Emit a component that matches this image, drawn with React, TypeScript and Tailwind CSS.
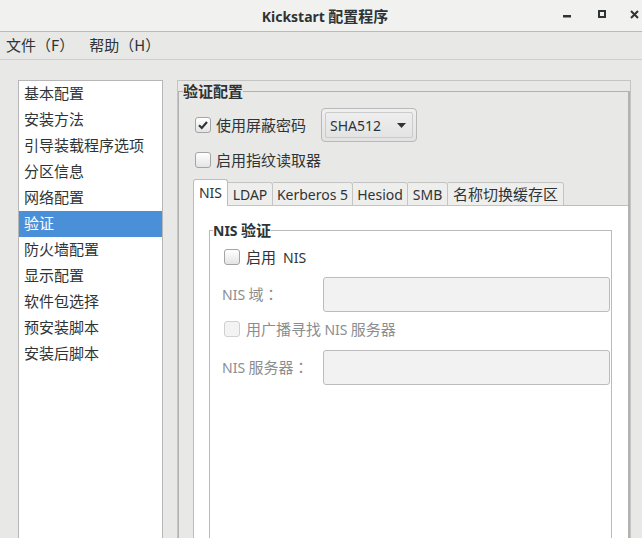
import React from "react";
import clsx from "clsx";

const sections = [
  "基本配置",
  "安装方法",
  "引导装载程序选项",
  "分区信息",
  "网络配置",
  "验证",
  "防火墙配置",
  "显示配置",
  "软件包选择",
  "预安装脚本",
  "安装后脚本",
];

const tabs = [
  { label: "NIS", latin: true, w: "w-[35px]" },
  { label: "LDAP", latin: true, w: "w-[45px]" },
  { label: "Kerberos 5", latin: true, w: "w-[80px]" },
  { label: "Hesiod", latin: true, w: "w-[55px]" },
  { label: "SMB", latin: true, w: "w-[40px]" },
  { label: "名称切换缓存区", latin: false, w: "w-[116px]" },
];

// latin runs are set in a narrower face than the CJK text
function L({ children }: { children: React.ReactNode }) {
  return <span className="font-['Noto_Sans'] text-[14px]">{children}</span>;
}

// full-width punctuation centred in its cell, as in the reference
function P({ children }: { children: React.ReactNode }) {
  return <span className="font-['Noto_Sans_CJK_TC',sans-serif]">{children}</span>;
}

function Check({ checked, disabled }: { checked?: boolean; disabled?: boolean }) {
  return (
    <span
      className={clsx(
        "flex h-[16px] w-[16px] shrink-0 items-center justify-center rounded-[3px] border",
        disabled
          ? "border-[#cfd1d1] bg-[#f3f3f3]"
          : "border-[#a3a5a5] bg-linear-to-b from-white to-[#e4e4e4]"
      )}
    >
      {checked && (
        <svg width="12" height="12" viewBox="0 0 12 12">
          <path d="M2 6.2 L4.8 9 L10 3" stroke="#2e3436" strokeWidth="2.2" fill="none" />
        </svg>
      )}
    </span>
  );
}

function Entry() {
  return <div className="h-[35px] w-[287px] rounded-[3px] border border-[#bcbcbc] bg-[#f2f2f2]" />;
}

export default function App() {
  return (
    <div className="flex h-[538px] w-[642px] flex-col overflow-hidden bg-[#e8e8e7] font-['Noto_Sans_CJK_SC',sans-serif] text-[15px] text-[#2e3436]">
      {/* title bar */}
      <div className="relative flex h-[32px] shrink-0 items-center justify-center border-b border-[#b9b9b6] bg-[#f1f1f0] pl-[8px]">
        <span className="font-bold leading-none">
          <span className="font-['Noto_Sans'] text-[14px]">Kickstart</span> 配置程序
        </span>
        <div className="absolute right-0 top-0 flex h-full items-start">
          <svg className="ml-0 mt-[15px]" width="8" height="3" viewBox="0 0 8 3">
            <rect x="0" y="0" width="8" height="2.5" fill="#2e3436" />
          </svg>
          <svg className="ml-[27px] mt-[10px]" width="8" height="8" viewBox="0 0 8 8">
            <rect x="1" y="1" width="6" height="6" stroke="#2e3436" strokeWidth="2" fill="none" />
          </svg>
          <svg className="ml-[24px] mr-[3px] mt-[10px]" width="9" height="9" viewBox="0 0 9 9">
            <path d="M1 1 L8 8 M8 1 L1 8" stroke="#2e3436" strokeWidth="2" />
          </svg>
        </div>
      </div>

      {/* menu bar */}
      <div className="flex h-[28px] shrink-0 items-center gap-[15px] border-b border-[#cfcfcd] pl-[6px]">
        <span>
          文件<P>（</P>F<P>）</P>
        </span>
        <span>
          帮助<P>（</P>H<P>）</P>
        </span>
      </div>

      <div className="flex min-h-0 flex-1 pl-[18px] pt-[20px]">
        {/* section list */}
        <div className="w-[145px] shrink-0 border border-b-0 border-[#b6b6b6] bg-white">
          {sections.map((s) => (
            <div
              key={s}
              className={clsx(
                "h-[26px] px-[5px] leading-[23px]",
                s === "验证" && "bg-[#4a90d9] text-white"
              )}
            >
              {s}
            </div>
          ))}
        </div>

        {/* right pane */}
        <div className="ml-[14px] w-[454px] shrink-0 border border-b-0 border-[#c4c4c2]">
          <fieldset className="h-full border-l border-r-2 border-t border-[#b2b2b2]">
            <legend className="ml-[4px] font-bold leading-[20px]">验证配置</legend>

            <div className="mt-[7px] flex h-[34px] items-center pl-[16px]">
              <Check checked />
              <span className="ml-[5px]">使用屏蔽密码</span>
              <div className="ml-[15px] h-[34px] w-[96px] rounded-[4px] border border-[#b8b8b8] bg-linear-to-b from-[#f0f0f0] to-[#e2e2e2] p-[3px]">
                <div className="flex h-full items-center justify-between rounded-[2px] border border-[#cbcbcb] pl-[4px] pr-[6px]">
                  <L>SHA512</L>
                  <svg width="9" height="5" viewBox="0 0 9 5">
                    <path d="M0 0 L9 0 L4.5 5 Z" fill="#2e3436" />
                  </svg>
                </div>
              </div>
            </div>

            <div className="mt-[9px] flex h-[18px] items-center pl-[16px]">
              <Check />
              <span className="ml-[5px]">启用指纹读取器</span>
            </div>

            {/* notebook */}
            <div className="ml-[14px] mt-[10px] flex h-full flex-col">
              <div className="flex h-[27px] shrink-0 items-end">
                {tabs.map((t, i) =>
                  i === 0 ? (
                    <div
                      key={t.label}
                      className={clsx(
                        "flex h-[27px] shrink-0 items-center justify-center rounded-t-[3px] border-l border-r border-t border-[#bdbdbd] bg-white pb-[1px]",
                        t.w
                      )}
                    >
                      <L>{t.label}</L>
                    </div>
                  ) : (
                    <div
                      key={t.label}
                      className={clsx(
                        "flex h-[24px] shrink-0 items-center justify-center rounded-tr-[3px] border-b border-r border-t border-[#c4c4c4] bg-[#eeeeed]",
                        t.w
                      )}
                    >
                      {t.latin ? <L>{t.label}</L> : t.label}
                    </div>
                  )
                )}
                <div className="flex-1 border-b border-[#bdbdbd]" />
              </div>

              <div className="flex-1 border-l border-[#bdbdbd] bg-white pt-[14px]">
                <fieldset className="ml-[15px] h-[400px] w-[403px] border border-[#bababa]">
                  <legend className="ml-[3px] font-bold leading-[20px]">
                    <span className="font-['Noto_Sans'] text-[14px]">NIS</span> 验证
                  </legend>

                  <div className="mt-[4px] flex h-[24px] items-center pl-[14px]">
                    <Check />
                    <span className="ml-[6px]">启用</span>
                    <span className="ml-[7px]">
                      <L>NIS</L>
                    </span>
                  </div>

                  <div className="mt-[8px] flex items-center pl-[12px] text-[#8b8e8f]">
                    <span className="w-[101px] shrink-0">
                      <L>NIS</L> 域<P>：</P>
                    </span>
                    <Entry />
                  </div>

                  <div className="mt-[5px] flex h-[24px] items-center pl-[14px] text-[#8b8e8f]">
                    <Check disabled />
                    <span className="ml-[6px]">
                      用广播寻找 <L>NIS</L> 服务器
                    </span>
                  </div>

                  <div className="mt-[9px] flex items-center pl-[12px] text-[#8b8e8f]">
                    <span className="w-[101px] shrink-0">
                      <L>NIS</L> 服务器<P>：</P>
                    </span>
                    <Entry />
                  </div>
                </fieldset>
              </div>
            </div>
          </fieldset>
        </div>
      </div>
    </div>
  );
}
